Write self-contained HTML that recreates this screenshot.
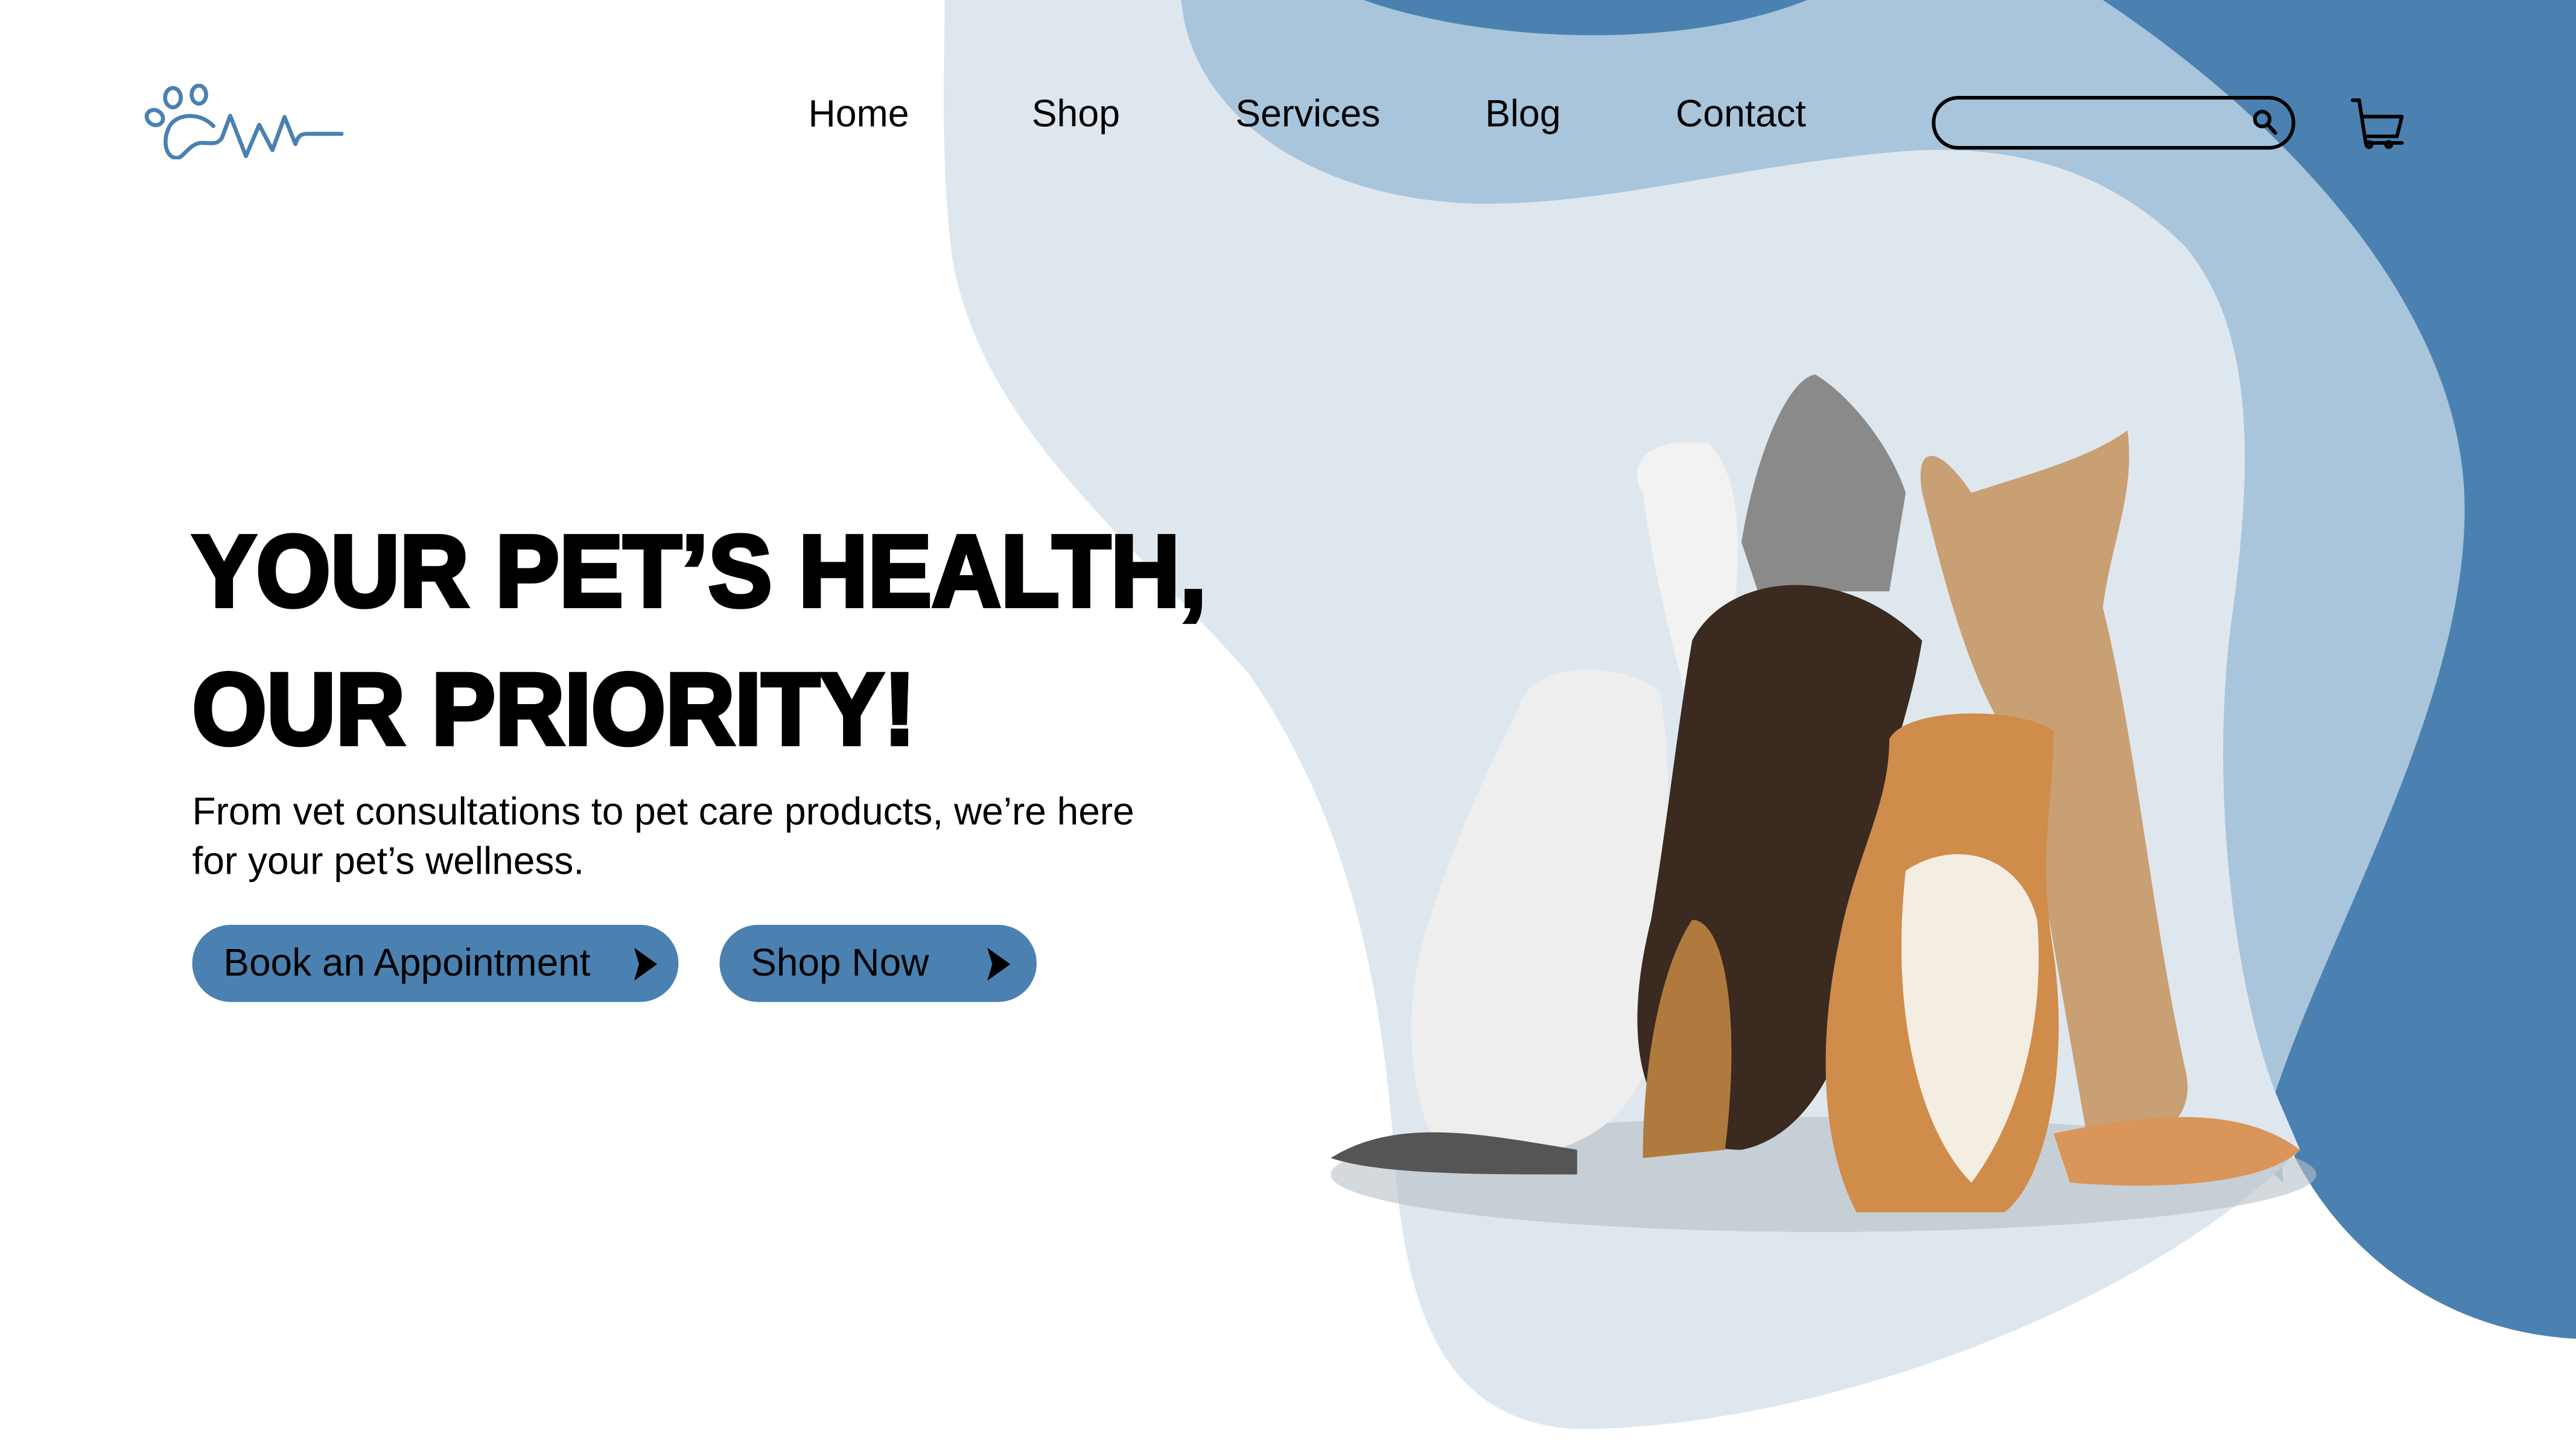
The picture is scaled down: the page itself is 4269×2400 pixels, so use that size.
<!DOCTYPE html>
<html><head><meta charset="utf-8"><style>
html,body{margin:0;padding:0;background:#fff;overflow:hidden}
#w{position:relative;width:1568px;height:882px;transform:scale(2.72258);transform-origin:0 0;font-family:"Liberation Sans",sans-serif;color:#000}
.a{position:absolute}
.nav{top:55px;font-size:23px;line-height:28px}
h1{position:absolute;left:117px;top:307px;margin:0;font-size:62px;line-height:84px;font-weight:bold;-webkit-text-stroke:2.5px #000;transform:scaleX(0.94);transform-origin:0 0;white-space:nowrap}
.btn{position:absolute;top:563px;height:47px;border-radius:24px;background:#4a81b0;font-size:23.5px;line-height:47px}
</style></head><body><div id="w">
<svg class="a" style="left:0;top:0" width="1568" height="882" viewBox="0 0 1568 882">
<path fill="#4a81b0" d="M830,0 L1568,0 L1568,815 C1470,810 1400,740 1380,660 L1000,60 L830,0 Z"/>
<path fill="#a8c5dc" d="M719,0 L830,0 C900,25 1020,32 1100,0 L1280,0 C1400,80 1495,190 1500,300 C1505,420 1420,560 1385,665 L1390,720 L900,300 L760,110 C730,70 719,30 719,0 Z"/>
<path fill="#dfe7ee" d="M575,0 L719,0 C725,70 800,122 900,124 C980,125 1060,100 1160,92 C1220,88 1280,100 1330,150 C1372,200 1372,280 1358,380 C1345,480 1360,600 1385,665 L1400,700 C1300,800 1100,870 960,870 C880,866 858,800 850,720 C842,600 822,500 760,410 C680,320 600,260 580,160 C572,100 575,40 575,0 Z"/>
<ellipse cx="1110" cy="715" rx="300" ry="35" fill="#b8bfc6" opacity=".6"/>
<path fill="#8a8a8a" d="M1060,330 C1070,270 1090,230 1105,228 C1125,240 1150,270 1160,300 L1150,360 L1070,360 Z"/>
<path fill="#f2f2f2" d="M1000,300 C990,285 1000,265 1040,270 C1060,290 1060,330 1055,380 L1025,420 C1015,380 1005,340 1000,300 Z"/>
<path fill="#eeeeee" d="M925,430 C930,405 980,400 1010,420 C1020,470 1015,560 1005,640 C990,700 930,710 880,705 C860,680 850,620 870,560 C890,500 905,470 925,430 Z"/>
<path fill="#555" d="M810,705 C850,680 900,690 960,700 L960,715 C900,715 840,715 810,705 Z"/>
<path fill="#c9a073" d="M1170,300 C1165,270 1180,270 1200,300 C1230,290 1270,280 1295,262 C1300,300 1285,330 1280,370 C1300,450 1310,560 1330,650 C1340,690 1300,700 1270,690 L1230,460 C1200,420 1185,360 1170,300 Z"/>
<path fill="#3a2a20" d="M1030,390 C1050,350 1120,340 1170,390 C1160,450 1140,480 1140,540 C1135,620 1110,690 1060,700 C1000,700 985,640 1005,560 C1015,500 1020,450 1030,390 Z"/>
<path fill="#b07a3e" d="M1030,560 C1050,560 1060,620 1050,700 L1000,705 C1000,650 1010,590 1030,560 Z"/>
<path fill="#d08c4a" d="M1150,450 C1160,430 1230,430 1250,445 C1250,490 1240,520 1250,580 C1260,650 1245,720 1220,738 L1130,738 C1110,700 1105,640 1120,570 C1130,520 1150,490 1150,450 Z"/>
<path fill="#f4ede2" d="M1160,530 C1190,510 1230,520 1240,560 C1245,620 1230,680 1200,720 C1170,690 1150,620 1160,530 Z"/>
<path fill="#d9955a" d="M1250,690 C1300,680 1360,670 1400,700 C1380,720 1320,725 1260,720 Z"/>
<g fill="none" stroke="#000" stroke-width="2.2" stroke-linecap="round" stroke-linejoin="round">
<rect x="1177" y="59.5" width="219" height="30.5" rx="15"/>
<circle cx="1377" cy="72.5" r="4.5"/><path d="M1380.5,76 L1385,81"/>
<path d="M1432,61 L1436,61 L1440,87 L1462,87 M1438,71 L1462,71 L1459,83 L1441,83"/>
<circle cx="1442" cy="88" r="1.6"/><circle cx="1454" cy="88" r="1.6"/>
</g>
</svg>
<svg class="a" style="left:88.2px;top:51.4px" width="121.2" height="45.9" viewBox="240 140 330 125">
<g fill="none" stroke="#4a81b0" stroke-width="6.7" stroke-linecap="round" stroke-linejoin="round">
<ellipse cx="257" cy="196" rx="14" ry="12" transform="rotate(30 257 196)"/>
<ellipse cx="287" cy="163" rx="13" ry="16"/>
<ellipse cx="330" cy="158" rx="12" ry="15"/>
<path d="M354,210 C330,185 290,190 280,213 C268,240 278,265 295,263 C305,262 315,238 335,238 C350,238 360,242 368,230 L382,193 L408,260 L430,208 L452,250 L472,195 L490,240 C495,225 500,223 510,223 L567,223"/>
</g></svg>
<div class="a nav" style="left:492px">Home</div>
<div class="a nav" style="left:628px">Shop</div>
<div class="a nav" style="left:752px">Services</div>
<div class="a nav" style="left:904px">Blog</div>
<div class="a nav" style="left:1020px">Contact</div>
<h1>YOUR PET’S HEALTH,<br>OUR PRIORITY!</h1>
<div class="a" style="left:117px;top:479px;font-size:23.5px;line-height:30px">From vet consultations to pet care products, we’re here<br>for your pet’s wellness.</div>
<div class="btn" style="left:117px;width:296px"><span style="margin-left:19px">Book an Appointment</span>
<svg class="a" style="left:268px;top:14px" width="16" height="20" viewBox="0 0 16 20"><path d="M1,0 L15,10 L1,20 L4,10 Z"/></svg></div>
<div class="btn" style="left:438px;width:193px"><span style="margin-left:19px">Shop Now</span>
<svg class="a" style="left:162px;top:14px" width="16" height="20" viewBox="0 0 16 20"><path d="M1,0 L15,10 L1,20 L4,10 Z"/></svg></div>
</div></body></html>
